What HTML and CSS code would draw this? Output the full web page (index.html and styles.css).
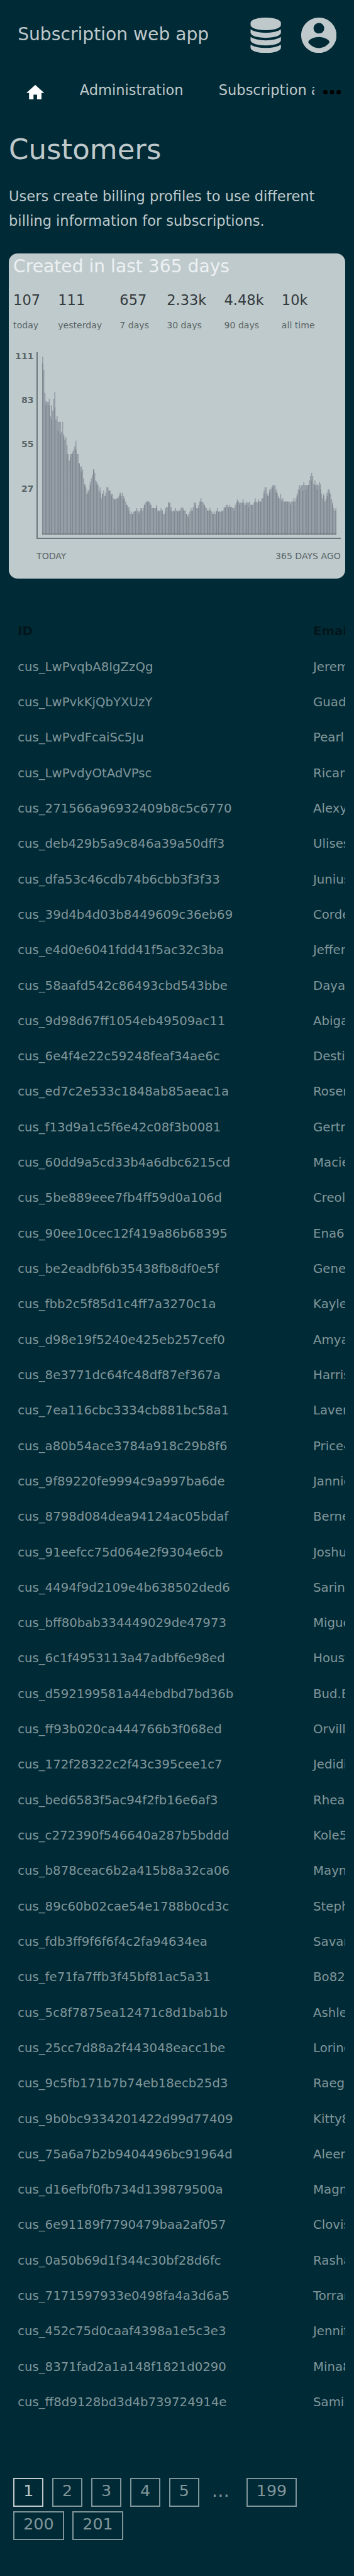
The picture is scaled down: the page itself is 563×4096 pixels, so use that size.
FILE: index.html
```html
<!DOCTYPE html>
<html lang="en">
<head>
<meta charset="utf-8">
<title>Customers</title>
<link rel="stylesheet" href="styles.css">
</head>
<body>
<header class="header">
  <div class="brand">Subscription web app</div>
  <svg class="icon-db" viewBox="0 0 1536 1792"><path d="M768 768q237 0 443-43t325-127v170q0 69-103 128t-280 93.5-385 34.5-385-34.5-280-93.5-103-128v-170q119 84 325 127t443 43zm0 768q237 0 443-43t325-127v170q0 69-103 128t-280 93.5-385 34.5-385-34.5-280-93.5-103-128v-170q119 84 325 127t443 43zm0-384q237 0 443-43t325-127v170q0 69-103 128t-280 93.5-385 34.5-385-34.5-280-93.5-103-128v-170q119 84 325 127t443 43zm0-1152q208 0 385 34.5t280 93.5 103 128v128q0 69-103 128t-280 93.5-385 34.5-385-34.5-280-93.5-103-128v-128q0-69 103-128t280-93.5 385-34.5z"/></svg>
  <svg class="icon-user" viewBox="2 2 20 20"><path d="M12 2C6.48 2 2 6.48 2 12s4.48 10 10 10 10-4.48 10-10S17.52 2 12 2zm0 3c1.66 0 3 1.34 3 3s-1.34 3-3 3-3-1.34-3-3 1.34-3 3-3zm0 14.2c-2.5 0-4.71-1.28-6-3.22.03-1.99 4-3.08 6-3.08 1.99 0 5.97 1.09 6 3.08-1.29 1.94-3.5 3.22-6 3.22z"/></svg>
</header>
<nav class="nav">
  <div class="nav-items">
    <svg class="icon-home" viewBox="2 3 20 17"><path d="M10 20v-6h4v6h5v-8h3L12 3 2 12h3v8z"/></svg>
    <span class="nav-item">Administration</span>
    <span class="nav-item">Subscription administration</span>
  </div>
  <svg class="icon-more" viewBox="0 0 32 8"><circle cx="4" cy="4" r="4"/><circle cx="16" cy="4" r="4"/><circle cx="28" cy="4" r="4"/></svg>
</nav>
<main>
  <h1 class="title">Customers</h1>
  <p class="intro">Users create billing profiles to use different billing information for subscriptions.</p>
  <section class="card">
    <h2 class="card-title">Created in last 365 days</h2>
    <div class="stats">
      <div><b class="num">107</b><span class="lbl">today</span></div>
      <div><b class="num">111</b><span class="lbl">yesterday</span></div>
      <div><b class="num">657</b><span class="lbl">7 days</span></div>
      <div><b class="num">2.33k</b><span class="lbl">30 days</span></div>
      <div><b class="num">4.48k</b><span class="lbl">90 days</span></div>
      <div><b class="num">10k</b><span class="lbl">all time</span></div>
    </div>
    <div class="chart">
      <div class="y-axis"><span>111</span><span>83</span><span>55</span><span>27</span></div>
      <div class="plot">
        <svg class="bars" viewBox="0 12 266 161" preserveAspectRatio="none">
          <path class="day" d="M0 173V12h1V24h1V45h1V52h1V53h2V50h1V66h1V56h1V61h1V50h1V44h1V69h1V66h1V71h3V80h1V71h1V82h1V87h1V85h1V92h1V100h1V106h1V100h2V98h1V96h1V93h1V88h1V100h2V108h1V112h1V111h1V114h1V122h1V127h1V130h1V136h1V133h1V132h1V125h1V122h1V119h1V114h1V117h1V124h1V125h1V128h1V133h1V130h1V140h1V136h1V133h1V138h1V135h1V130h2V133h2V136h2V140h1V141h2V140h2V138h1V135h1V138h1V135h1V138h1V140h1V143h1V146h1V148h2V154h1V152h1V154h1V152h2V151h1V149h1V151h1V152h1V151h1V149h1V151h1V149h1V146h1V144h1V143h3V144h1V146h1V149h4V146h1V151h3V149h1V151h1V154h2V149h1V148h2V144h2V148h1V152h1V151h2V149h1V151h2V152h1V151h1V149h1V148h1V149h1V151h2V154h1V156h1V154h1V152h1V149h1V151h1V148h1V144h2V149h2V146h1V143h1V140h1V143h1V144h1V146h1V148h1V149h1V151h2V149h1V151h1V152h1V154h1V152h1V154h1V151h1V149h1V152h3V151h2V148h2V146h2V148h1V146h1V148h2V149h2V146h1V144h1V141h1V143h1V144h3V141h1V144h1V146h1V143h1V144h2V143h1V146h3V144h1V140h1V143h1V144h1V141h1V143h2V140h2V133h1V130h2V136h1V138h1V132h2V130h1V128h3V132h1V135h1V138h1V140h1V136h1V141h1V140h1V143h6V144h1V143h2V140h1V143h1V140h1V136h1V132h1V128h1V130h1V128h2V125h1V128h4V124h1V120h1V117h1V120h1V127h1V124h1V128h1V127h1V128h1V125h1V127h1V136h1V140h1V136h1V143h1V141h1V135h1V132h2V136h1V141h1V144h1V149h1V151h1V149h1V173z"/>
          <path class="overlap" d="M.5 18V173M3.5 56V173M6.5 56V173M8.5 69V173M11.5 58V173M14.5 79V173M16.5 82V173M19.5 84V173M22.5 100V173M25.5 103V173M27.5 100V173M30.5 96V173M33.5 109V173M35.5 116V173M38.5 128V173M41.5 135V173M43.5 128V173M46.5 114V173M49.5 127V173M52.5 135V173M54.5 136V173M57.5 138V173M60.5 133V173M62.5 138V173M65.5 141V173M68.5 140V173M70.5 136V173M73.5 141V173M76.5 146V173M78.5 151V173M81.5 154V173M84.5 152V173M87.5 154V173M89.5 149V173M92.5 146V173M95.5 143V173M97.5 146V173M100.5 149V173M103.5 148V173M105.5 152V173M108.5 151V173M111.5 152V173M114.5 144V173M116.5 151V173M119.5 152V173M122.5 152V173M124.5 151V173M127.5 151V173M130.5 154V173M132.5 157V173M135.5 151V173M138.5 146V173M141.5 149V173M143.5 143V173M146.5 146V173M149.5 151V173M151.5 151V173M154.5 154V173M157.5 152V173M159.5 152V173M162.5 152V173M165.5 149V173M168.5 148V173M170.5 148V173M173.5 151V173M176.5 143V173M178.5 146V173M181.5 144V173M184.5 146V173M186.5 148V173M189.5 146V173M192.5 143V173M195.5 143V173M197.5 143V173M200.5 136V173M203.5 138V173M205.5 135V173M208.5 130V173M211.5 135V173M213.5 140V173M216.5 143V173M219.5 143V173M221.5 143V173M224.5 146V173M227.5 143V173M230.5 138V173M232.5 133V173M235.5 133V173M238.5 132V173M240.5 128V173M243.5 124V173M246.5 128V173M248.5 132V173M251.5 132V173M254.5 138V173M257.5 138V173M259.5 135V173M262.5 146V173M265.5 151V173"/>
          <path class="base" d="M0 172h266v1H0z"/>
        </svg>
      </div>
    </div>
    <div class="x-axis"><span>TODAY</span><span>365 DAYS AGO</span></div>
  </section>
  <div class="table-wrap">
    <table class="table">
      <colgroup><col class="col-id"><col class="col-email"></colgroup>
      <thead><tr><th>ID</th><th>Email</th></tr></thead>
      <tbody>
        <tr><td>cus_LwPvqbA8IgZzQg</td><td>Jeremy</td></tr>
        <tr><td>cus_LwPvkKjQbYXUzY</td><td>Guadalupe</td></tr>
        <tr><td>cus_LwPvdFcaiSc5Ju</td><td>Pearl.</td></tr>
        <tr><td>cus_LwPvdyOtAdVPsc</td><td>Ricardo</td></tr>
        <tr><td>cus_271566a96932409b8c5c6770</td><td>Alexys</td></tr>
        <tr><td>cus_deb429b5a9c846a39a50dff3</td><td>Ulises</td></tr>
        <tr><td>cus_dfa53c46cdb74b6cbb3f3f33</td><td>Junius</td></tr>
        <tr><td>cus_39d4b4d03b8449609c36eb69</td><td>Cordelia</td></tr>
        <tr><td>cus_e4d0e6041fdd41f5ac32c3ba</td><td>Jeffery</td></tr>
        <tr><td>cus_58aafd542c86493cbd543bbe</td><td>Dayana</td></tr>
        <tr><td>cus_9d98d67ff1054eb49509ac11</td><td>Abigail</td></tr>
        <tr><td>cus_6e4f4e22c59248feaf34ae6c</td><td>Destiny</td></tr>
        <tr><td>cus_ed7c2e533c1848ab85aeac1a</td><td>Rosemary</td></tr>
        <tr><td>cus_f13d9a1c5f6e42c08f3b0081</td><td>Gertrude</td></tr>
        <tr><td>cus_60dd9a5cd33b4a6dbc6215cd</td><td>Macie</td></tr>
        <tr><td>cus_5be889eee7fb4ff59d0a106d</td><td>Creola</td></tr>
        <tr><td>cus_90ee10cec12f419a86b68395</td><td>Ena6</td></tr>
        <tr><td>cus_be2eadbf6b35438fb8df0e5f</td><td>Genevieve</td></tr>
        <tr><td>cus_fbb2c5f85d1c4ff7a3270c1a</td><td>Kayley</td></tr>
        <tr><td>cus_d98e19f5240e425eb257cef0</td><td>Amya</td></tr>
        <tr><td>cus_8e3771dc64fc48df87ef367a</td><td>Harrison</td></tr>
        <tr><td>cus_7ea116cbc3334cb881bc58a1</td><td>Laverne</td></tr>
        <tr><td>cus_a80b54ace3784a918c29b8f6</td><td>Price4</td></tr>
        <tr><td>cus_9f89220fe9994c9a997ba6de</td><td>Jannie</td></tr>
        <tr><td>cus_8798d084dea94124ac05bdaf</td><td>Berneice</td></tr>
        <tr><td>cus_91eefcc75d064e2f9304e6cb</td><td>Joshua</td></tr>
        <tr><td>cus_4494f9d2109e4b638502ded6</td><td>Sarina</td></tr>
        <tr><td>cus_bff80bab334449029de47973</td><td>Miguel</td></tr>
        <tr><td>cus_6c1f4953113a47adbf6e98ed</td><td>Houston</td></tr>
        <tr><td>cus_d592199581a44ebdbd7bd36b</td><td>Bud.B</td></tr>
        <tr><td>cus_ff93b020ca444766b3f068ed</td><td>Orville</td></tr>
        <tr><td>cus_172f28322c2f43c395cee1c7</td><td>Jedidiah</td></tr>
        <tr><td>cus_bed6583f5ac94f2fb16e6af3</td><td>Rhea</td></tr>
        <tr><td>cus_c272390f546640a287b5bddd</td><td>Kole5</td></tr>
        <tr><td>cus_b878ceac6b2a415b8a32ca06</td><td>Maynard</td></tr>
        <tr><td>cus_89c60b02cae54e1788b0cd3c</td><td>Stephen</td></tr>
        <tr><td>cus_fdb3ff9f6f6f4c2fa94634ea</td><td>Savannah</td></tr>
        <tr><td>cus_fe71fa7ffb3f45bf81ac5a31</td><td>Bo82</td></tr>
        <tr><td>cus_5c8f7875ea12471c8d1bab1b</td><td>Ashley</td></tr>
        <tr><td>cus_25cc7d88a2f443048eacc1be</td><td>Lorine</td></tr>
        <tr><td>cus_9c5fb171b7b74eb18ecb25d3</td><td>Raegan</td></tr>
        <tr><td>cus_9b0bc9334201422d99d77409</td><td>Kitty8</td></tr>
        <tr><td>cus_75a6a7b2b9404496bc91964d</td><td>Aleen</td></tr>
        <tr><td>cus_d16efbf0fb734d139879500a</td><td>Magnus</td></tr>
        <tr><td>cus_6e91189f7790479baa2af057</td><td>Clovis</td></tr>
        <tr><td>cus_0a50b69d1f344c30bf28d6fc</td><td>Rashad</td></tr>
        <tr><td>cus_7171597933e0498fa4a3d6a5</td><td>Torrance</td></tr>
        <tr><td>cus_452c75d0caaf4398a1e5c3e3</td><td>Jennifer</td></tr>
        <tr><td>cus_8371fad2a1a148f1821d0290</td><td>Mina8</td></tr>
        <tr><td>cus_ff8d9128bd3d4b739724914e</td><td>Samir</td></tr>
      </tbody>
    </table>
  </div>
  <div class="pages">
    <span class="page current">1</span><span class="page">2</span><span class="page">3</span><span class="page">4</span><span class="page">5</span><span class="gap">…</span><span class="page">199</span><span class="page">200</span><span class="page">201</span>
  </div>
</main>
</body>
</html>
```
FILE: styles.css
```css
:root { --u: .88px; }
* { box-sizing: border-box; }
html { background: #002b36; }
body {
  margin: 0;
  overflow: hidden;
  height: 4096px;
  background: #002b36;
  color: #bfc8cb;
  font-family: "DejaVu Sans", sans-serif;
  font-size: calc(var(--u) * 25.6);
}
svg { display: block; flex: none; fill: #bfc8cb; }

.header {
  display: flex;
  align-items: center;
  height: calc(var(--u) * 128);
  padding: 0 calc(var(--u) * 32);
}
.brand {
  flex: 1;
  font-size: calc(var(--u) * 32);
  line-height: calc(var(--u) * 64);
  padding-bottom: calc(var(--u) * 2);
}
.icon-db { width: calc(var(--u) * 56); height: calc(var(--u) * 64); margin-right: calc(var(--u) * 36); }
.icon-user { width: calc(var(--u) * 64); height: calc(var(--u) * 64); }

.nav {
  display: flex;
  align-items: center;
  height: calc(var(--u) * 70);
  padding: 0 calc(var(--u) * 24) 0 calc(var(--u) * 48);
}
.nav-items {
  display: flex;
  align-items: center;
  width: calc(var(--u) * 520);
  gap: calc(var(--u) * 64);
  overflow: hidden;
  white-space: nowrap;
}
.nav-item { flex: none; line-height: calc(var(--u) * 44); }
.icon-home { width: calc(var(--u) * 32); height: calc(var(--u) * 27.2); fill: #fff; margin-top: calc(var(--u) * 7); }
.icon-more { width: calc(var(--u) * 32); height: calc(var(--u) * 8); fill: #000; margin: calc(var(--u) * 6) 0 0 calc(var(--u) * 16); }

main { padding: 0 calc(var(--u) * 16); }
.title {
  margin: calc(var(--u) * 29) 0 calc(var(--u) * 19);
  font-size: calc(var(--u) * 51.2);
  font-weight: 400;
  line-height: calc(var(--u) * 87);
}
.intro { margin: 0 0 calc(var(--u) * 36.4); line-height: calc(var(--u) * 44.3); }

.card {
  height: calc(var(--u) * 588);
  padding: calc(var(--u) * 3) calc(var(--u) * 8) 0;
  border-radius: calc(var(--u) * 16);
  background: #bfcacc;
  color: #5a6567;
  font-size: calc(var(--u) * 16);
}
.card-title {
  margin: 0;
  color: #edf1f3;
  font-size: calc(var(--u) * 32);
  font-weight: 400;
  line-height: calc(var(--u) * 40);
}
.stats { display: flex; gap: calc(var(--u) * 32); padding-top: calc(var(--u) * 22); }
.num {
  display: block;
  color: #343b3e;
  font-size: calc(var(--u) * 25.6);
  font-weight: 400;
  line-height: calc(var(--u) * 40);
}
.lbl { display: block; margin-top: calc(var(--u) * 12); line-height: calc(var(--u) * 27); }

.chart { display: flex; margin-top: calc(var(--u) * 34); }
.y-axis {
  display: flex;
  flex-direction: column;
  width: calc(var(--u) * 42);
  padding-right: calc(var(--u) * 5);
  text-align: right;
  font-weight: 700;
  line-height: calc(var(--u) * 14);
}
.y-axis span { height: calc(var(--u) * 80); }
.plot {
  width: calc(var(--u) * 550);
  height: calc(var(--u) * 338);
  padding: calc(var(--u) * 8) calc(var(--u) * 8) 0;
  border: solid #6c777f;
  border-width: 0 0 2px 2px;
}
.bars { width: calc(var(--u) * 532); height: calc(var(--u) * 322); }
.day { fill: #969fa7; }
.overlap { fill: none; stroke: #808991; stroke-width: 1; }
.base { fill: rgba(0, 0, 0, .25); }
.x-axis {
  display: flex;
  justify-content: space-between;
  margin-top: calc(var(--u) * 20);
  padding-left: calc(var(--u) * 42);
  line-height: calc(var(--u) * 22);
}

.table-wrap { margin-top: calc(var(--u) * 63.5); overflow: hidden; }
.table {
  width: calc(var(--u) * 800);
  border-collapse: collapse;
  table-layout: fixed;
  color: #80959a;
  font-size: calc(var(--u) * 22.4);
}
.col-id { width: calc(var(--u) * 534); }
.table th, .table td {
  height: calc(var(--u) * 64);
  padding: 0 0 0 calc(var(--u) * 16);
  text-align: left;
  vertical-align: middle;
  white-space: nowrap;
  line-height: calc(var(--u) * 32);
}
.table th { color: #00161b; }

.pages {
  display: flex;
  flex-wrap: wrap;
  gap: calc(var(--u) * 8) calc(var(--u) * 15.5);
  margin-top: calc(var(--u) * 104.5);
  padding: 0 calc(var(--u) * 8);
  color: #80959a;
  font-size: calc(var(--u) * 28.8);
  line-height: calc(var(--u) * 43);
}
.page {
  height: calc(var(--u) * 52);
  padding: 0 calc(var(--u) * 16);
  border: 2px solid #80959a;
}
.current { border-color: #bfc8cb; color: #bfc8cb; }
.gap {
  width: calc(var(--u) * 54);
  padding: 2px 0 0 calc(var(--u) * 7);
  font-size: calc(var(--u) * 32);
}
```
